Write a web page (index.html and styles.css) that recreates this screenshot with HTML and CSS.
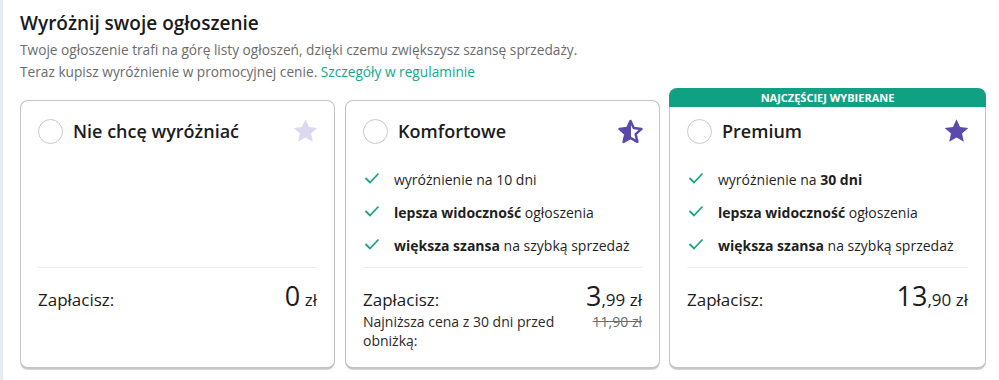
FILE: index.html
```html
<!DOCTYPE html>
<html lang="pl">
<head>
<meta charset="utf-8">
<link rel="stylesheet" href="styles.css">
</head>
<body>
<div class="page">
  <h2 class="title">Wyróżnij swoje ogłoszenie</h2>
  <p class="lead">Twoje ogłoszenie trafi na górę listy ogłoszeń, dzięki czemu zwiększysz szansę sprzedaży.<br>Teraz kupisz wyróżnienie w promocyjnej cenie. <a class="link" href="#">Szczegóły w regulaminie</a></p>

  <div class="cards">
    <div class="card">
      <div class="head">
        <span class="radio"></span>
        <span class="name">Nie chcę wyróżniać</span>
        <svg class="star" viewBox="0 0 24 24"><path class="star-light" d="M12 1.2l3.1 6.8 7.4.8-5.6 5 1.6 7.3L12 17.4l-6.5 3.7 1.6-7.3-5.6-5 7.4-.8z"/></svg>
      </div>
      <ul class="features"></ul>
      <div class="foot">
        <div class="pay-row">
          <span class="pay">Zapłacisz:</span>
          <span class="price"><span class="big">0</span> zł</span>
        </div>
      </div>
    </div>

    <div class="card">
      <div class="head">
        <span class="radio"></span>
        <span class="name">Komfortowe</span>
        <svg class="star" viewBox="0 0 24 24">
          <defs><linearGradient id="half" x1="0" x2="1" y1="0" y2="0"><stop offset="50%" stop-color="#5b4aab"/><stop offset="50%" stop-color="#ffffff"/></linearGradient></defs>
          <path d="M12 2.6l2.9 6.3 6.9.8-5.2 4.7 1.5 6.8L12 17.7l-6.1 3.5 1.5-6.8-5.2-4.7 6.9-.8z" fill="url(#half)" stroke="#5b4aab" stroke-width="2.2" stroke-linejoin="round"/>
        </svg>
      </div>
      <ul class="features">
        <li><svg class="check" viewBox="0 0 16 12"><path d="M1.5 6l4.5 4.5L14.5 1.5"/></svg><span>wyróżnienie na 10 dni</span></li>
        <li><svg class="check" viewBox="0 0 16 12"><path d="M1.5 6l4.5 4.5L14.5 1.5"/></svg><span><b>lepsza widoczność</b> ogłoszenia</span></li>
        <li><svg class="check" viewBox="0 0 16 12"><path d="M1.5 6l4.5 4.5L14.5 1.5"/></svg><span><b>większa szansa</b> na szybką sprzedaż</span></li>
      </ul>
      <div class="foot">
        <div class="pay-row">
          <span class="pay">Zapłacisz:</span>
          <span class="price"><span class="big">3</span>,99 zł</span>
        </div>
        <div class="lowest">
          <span class="lowest-text">Najniższa cena z 30 dni przed obniżką:</span>
          <span class="old">11,90 zł</span>
        </div>
      </div>
    </div>

    <div class="card card-premium">
      <div class="badge">NAJCZĘŚCIEJ WYBIERANE</div>
      <div class="head">
        <span class="radio"></span>
        <span class="name">Premium</span>
        <svg class="star" viewBox="0 0 24 24"><path class="star-full" d="M12 1.2l3.1 6.8 7.4.8-5.6 5 1.6 7.3L12 17.4l-6.5 3.7 1.6-7.3-5.6-5 7.4-.8z"/></svg>
      </div>
      <ul class="features">
        <li><svg class="check" viewBox="0 0 16 12"><path d="M1.5 6l4.5 4.5L14.5 1.5"/></svg><span>wyróżnienie na <b>30 dni</b></span></li>
        <li><svg class="check" viewBox="0 0 16 12"><path d="M1.5 6l4.5 4.5L14.5 1.5"/></svg><span><b>lepsza widoczność</b> ogłoszenia</span></li>
        <li><svg class="check" viewBox="0 0 16 12"><path d="M1.5 6l4.5 4.5L14.5 1.5"/></svg><span><b>większa szansa</b> na szybką sprzedaż</span></li>
      </ul>
      <div class="foot">
        <div class="pay-row">
          <span class="pay">Zapłacisz:</span>
          <span class="price"><span class="big">13</span>,90 zł</span>
        </div>
      </div>
    </div>
  </div>
</div>
</body>
</html>
```
FILE: styles.css
```css
* { box-sizing: border-box; }
html, body { margin: 0; padding: 0; background: #fff; }
body {
  font-family: "Open Sans", "Noto Sans", "Liberation Sans", sans-serif;
  color: #1c1c1c;
  border-left: 3px solid #e6ebf1;
  min-height: 380px;
}
.page { padding: 10px 14px 0 17px; }
.title {
  margin: 0;
  font-size: 19px;
  line-height: 26px;
  font-weight: 600;
  color: #1a1a1a;
}
.lead {
  margin: 3px 0 0;
  font-size: 13.7px;
  line-height: 22px;
  color: #6b6b6b;
}
.link { color: #17a78b; text-decoration: none; }
.cards {
  margin-top: 17px;
  display: grid;
  grid-template-columns: 315px 315px 316px;
  column-gap: 10px;
  align-items: start;
}
.card {
  position: relative;
  height: 269px;
  border: 1px solid #c4c4c4;
  border-bottom: 2px solid #c4c4c4;
  border-radius: 8px;
  padding: 18px 17px 0 17px;
  display: flex;
  flex-direction: column;
  background: #fff;
  box-shadow: 0 1px 0 #d8d8d8;
}
.card + .card + .card { margin-left: -1px; }
.badge {
  position: absolute;
  top: -13px;
  left: -1px;
  right: -1px;
  height: 19px;
  background: #10a182;
  border-radius: 8px 8px 0 0;
  color: #fff;
  font-size: 11px;
  font-weight: 700;
  line-height: 19px;
  text-align: center;
}
.head {
  display: flex;
  align-items: center;
  height: 24px;
}
.radio {
  width: 25px;
  height: 25px;
  border: 1px solid #c9c9c9;
  border-radius: 50%;
  flex: none;
}
.name {
  margin-left: 10px;
  font-size: 18px;
  line-height: 24px;
  font-weight: 600;
  flex: 1;
}
.star { width: 27px; height: 27px; flex: none; margin-right: -2px; }
.star-light { fill: #dcd8ef; }
.star-full { fill: #5b4aab; }
.features {
  list-style: none;
  margin: 0;
  padding: 27px 0 0 1px;
  height: 125px;
  flex: none;
  border-bottom: 1px solid #ececec;
  display: flex;
  flex-direction: column;
  gap: 13px;
}
.features li {
  display: flex;
  align-items: center;
  height: 20px;
  line-height: 20px;
  font-size: 14px;
  color: #1f1f1f;
}
.features b { font-weight: 700; }
.check {
  width: 16px;
  height: 12px;
  margin-right: 14px;
  fill: none;
  stroke: #17a48a;
  stroke-width: 1.8;
  margin-top: -4px;
}
.foot { padding-top: 11px; }
.pay-row {
  display: flex;
  justify-content: space-between;
  align-items: baseline;
  height: 33px;
  line-height: 33px;
}
.pay { font-size: 17px; }
.price { font-size: 17px; font-weight: 500; }
.big { font-size: 27px; font-weight: 500; }
.lowest {
  display: flex;
  justify-content: space-between;
  align-items: flex-start;
  font-size: 14px;
  line-height: 19px;
  color: #2a2a2a;
}
.lowest-text { width: 210px; }
.old { color: #6b6b6b; text-decoration: line-through; }
```
